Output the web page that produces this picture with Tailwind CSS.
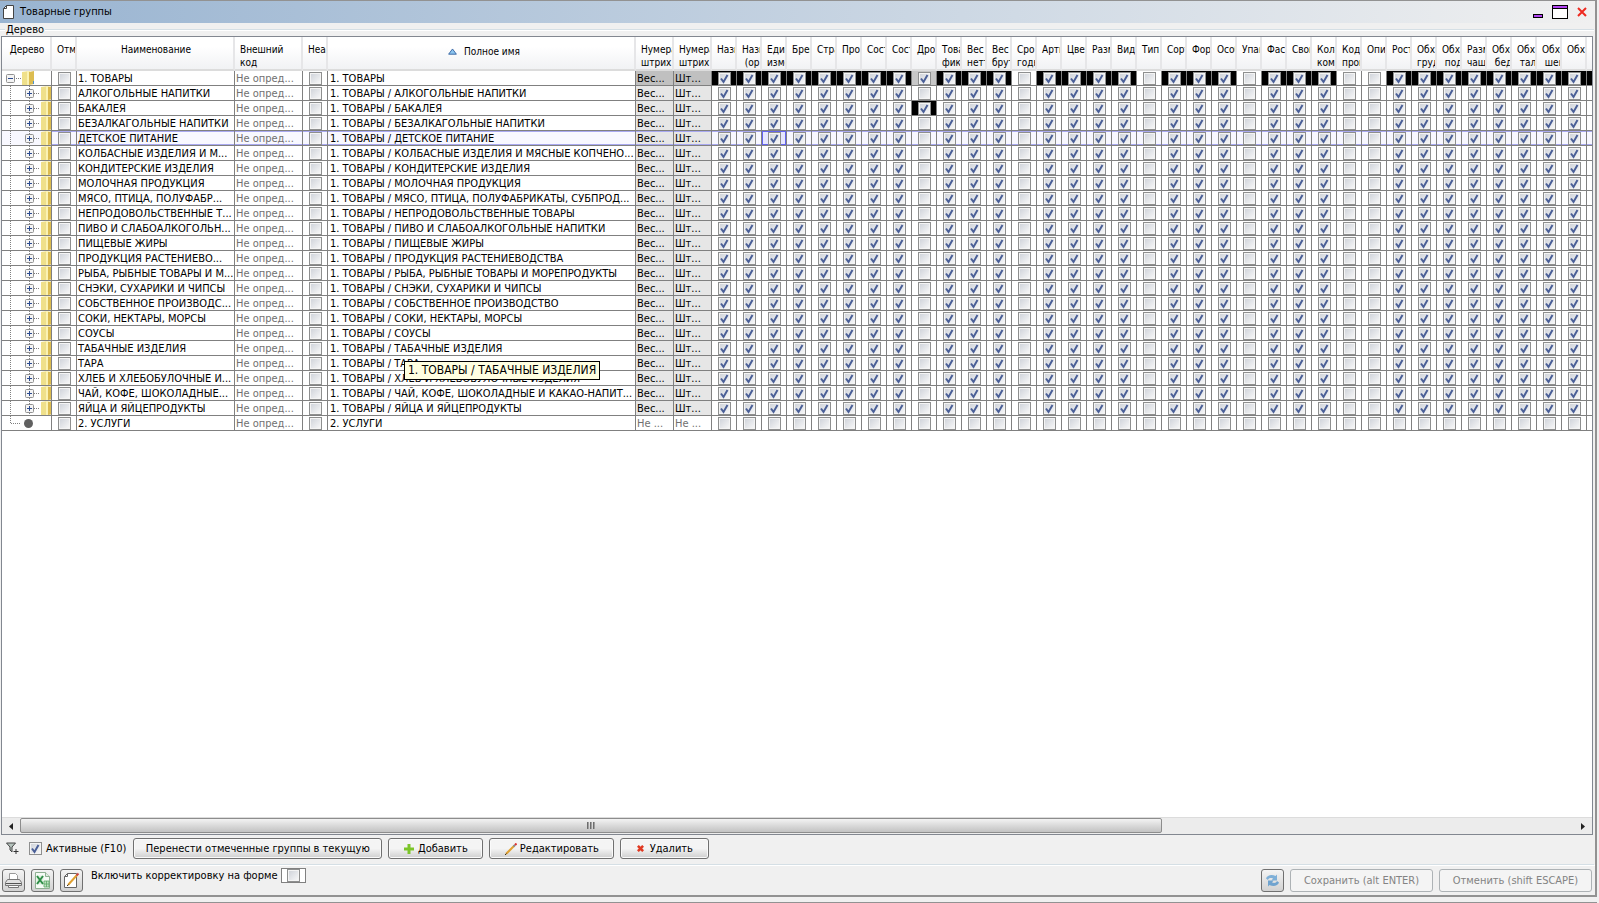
<!DOCTYPE html>
<html lang="ru">

<head>
    <meta charset="UTF-8">
    <meta name="viewport" content="width=device-width, initial-scale=1.0">
    <title>Товарные группы</title>
    <script src="https://cdn.jsdelivr.net/npm/@tailwindcss/browser@4"></script>
</head>

<body class="bg-[#f0f0f0]">
    <div class="flex h-screen flex-col overflow-hidden text-[11px] leading-[14px] text-black font-['DejaVu_Sans_Condensed','DejaVu_Sans',sans-serif]">
        <main class="flex min-h-0 flex-1 flex-col border-t border-r-2 border-b-2 border-[#929292] mr-[2px]">

            <header class="flex h-[22px] shrink-0 items-center bg-linear-to-r from-[#99b4d1] to-[#f0f0f0] pl-[3px] pr-2">
                <svg class="h-[14px] w-[11px]" viewBox="0 0 11 14"><path d="M3.5.5h7v13H.5v-10z" fill="#fff" stroke="#444"/><path d="M.5 3.5h3v-3" fill="none" stroke="#444"/></svg>
                <h1 class="ml-[6px] flex-1">Товарные группы</h1>
                <button type="button" aria-label="Свернуть" class="mt-[8px] h-[4px] w-[10px] border border-black bg-[#b044f0]"></button>
                <button type="button" aria-label="Развернуть" class="ml-[9px] flex h-[14px] w-[16px] items-start border border-black bg-white"><span class="h-[3px] w-full border-b border-black bg-[#b044f0]"></span></button>
                <button type="button" aria-label="Закрыть" class="ml-[9px]">
                    <svg class="h-[10px] w-[10px]" viewBox="0 0 10 10"><path d="M1 1l8 8M9 1L1 9" stroke="#ee2a20" stroke-width="2"/></svg>
                </button>
            </header>

            <!-- group box -->
            <section class="flex min-h-0 flex-1 flex-col pr-[1px]">
                <div class="flex h-[13px] shrink-0 items-center">
                    <span class="h-[2px] w-[5px] border-t border-b border-t-[#d5dfe5] border-b-white"></span>
                    <h2 class="px-[1px]">Дерево</h2>
                    <span class="h-[2px] flex-1 border-t border-b border-t-[#d5dfe5] border-b-white"></span>
                </div>

                <div class="relative mx-[1px] flex min-h-0 flex-1 flex-col border border-[#828790] bg-white">
                    <div class="min-h-0 flex-1 overflow-hidden">
                        <table class="w-[1610px] table-fixed border-separate border-spacing-0">
                            <colgroup id="cols">
                                <col class="w-[50px]"><col class="w-[25px]"><col class="w-[158px]"><col class="w-[68px]"><col class="w-[25px]"><col class="w-[308px]"><col class="w-[38px]"><col class="w-[38px]">
                            </colgroup>
                            <thead><tr id="head"></tr></thead>
                            <tbody id="rows"></tbody>
                        </table>
                    </div>
                    <div class="flex h-[17px] shrink-0 border-t border-[#dcdcdc] bg-[#ececec]">
                        <button type="button" aria-label="Влево" class="flex w-[18px] items-center justify-center">
                            <svg class="h-[7px] w-1" viewBox="0 0 4 7"><path d="M4 0v7L0 3.5z" fill="#222"/></svg>
                        </button>
                        <div class="min-w-0 flex-1">
                            <div class="flex h-[15px] w-[73.5%] items-center justify-center gap-[1px] rounded-[2px] border border-[#8d8d8d] bg-linear-to-b from-[#f3f3f3] via-[#dadada] to-[#c3c3c3]">
                                <span class="h-[7px] w-[2px] bg-linear-to-r from-[#555] to-[#bbb]"></span><span class="h-[7px] w-[2px] bg-linear-to-r from-[#555] to-[#bbb]"></span><span class="h-[7px] w-[2px] bg-linear-to-r from-[#555] to-[#bbb]"></span>
                            </div>
                        </div>
                        <button type="button" aria-label="Вправо" class="flex w-[18px] items-center justify-center">
                            <svg class="h-[7px] w-1" viewBox="0 0 4 7"><path d="M0 0v7l4-3.5z" fill="#222"/></svg>
                        </button>
                    </div>
                    <div role="tooltip" class="absolute top-[324px] left-[402px] h-[19px] border border-black bg-[#ffffe1] px-[3px] text-[12px] leading-[17px] whitespace-nowrap">1. ТОВАРЫ / ТАБАЧНЫЕ ИЗДЕЛИЯ</div>
                </div>

                <div class="flex h-[30px] shrink-0 items-center border-b border-[#d5dfe5] pb-[2px] pl-[6px]">
                    <button type="button" aria-label="Фильтр">
                        <svg class="h-[13px] w-[13px]" viewBox="0 0 13 13"><path d="M.5 1h9L6 5v5L4 8V5z" fill="#b5c3bd" stroke="#444"/><path d="M10 7v5M7.500 9.500h5" stroke="#333"/></svg>
                    </button>
                    <label class="ml-[10px] flex items-center gap-1">
                        <span class="grid">
                            <input type="checkbox" checked class="peer col-start-1 row-start-1 h-[13px] w-[13px] appearance-none border border-[#8e8f8f] bg-linear-to-br from-[#cdd1d8] to-[#fafafa] shadow-[inset_0_0_0_1px_#f4f4f4]">
                            <svg class="pointer-events-none col-start-1 row-start-1 hidden h-[13px] w-[13px] peer-checked:block" viewBox="0 0 13 13"><path d="M3 6.500l2.500 3.500L9.500 3" fill="none" stroke="#4a5f97" stroke-width="2"/></svg>
                        </span>
                        Активные (F10)
                    </label>
                    <div class="ml-[7px] flex gap-[6px]">
                        <button type="button" class="h-[21px] w-[249px] rounded-[3px] border border-[#707070] bg-linear-to-b from-[#f4f4f4] from-50% to-[#cfcfcf] shadow-[inset_0_0_0_1px_#fafafa]">Перенести отмеченные группы в текущую</button>
                        <button type="button" class="flex h-[21px] w-[95px] items-center justify-center gap-1 rounded-[3px] border border-[#707070] bg-linear-to-b from-[#f4f4f4] from-50% to-[#cfcfcf] shadow-[inset_0_0_0_1px_#fafafa]">
                            <svg class="h-[10px] w-[10px]" viewBox="0 0 10 10"><path d="M5 0v10M0 5h10" stroke="#7cc52a" stroke-width="3"/></svg>
                            Добавить
                        </button>
                        <button type="button" class="flex h-[21px] w-[125px] items-center justify-center gap-[3px] rounded-[3px] border border-[#707070] bg-linear-to-b from-[#f4f4f4] from-50% to-[#cfcfcf] shadow-[inset_0_0_0_1px_#fafafa]">
                            <svg class="h-[12px] w-[12px]" viewBox="0 0 12 12"><path d="M1 11L9 3" stroke="#e0a030" stroke-width="2"/><path d="M8.500 3.500L10 2" stroke="#888" stroke-width="2"/><path d="M10 2L11.500.5" stroke="#d33" stroke-width="2"/><path d="M0 12l1.500-1.500" stroke="#333"/></svg>
                            Редактировать
                        </button>
                        <button type="button" class="flex h-[21px] w-[89px] items-center justify-center gap-[6px] rounded-[3px] border border-[#707070] bg-linear-to-b from-[#f4f4f4] from-50% to-[#cfcfcf] shadow-[inset_0_0_0_1px_#fafafa]">
                            <svg class="h-[7px] w-[7px]" viewBox="0 0 8 8"><path d="M1 1l6 6M7 1L1 7" stroke="#e03a22" stroke-width="3"/></svg>
                            Удалить
                        </button>
                    </div>
                </div>
            </section>

            <footer class="flex h-[30px] shrink-0 items-start border-t border-white pt-[2px] pl-[2px] pr-[3px]">
                <div class="mt-[1px] flex gap-[6px]">
                    <button type="button" aria-label="Печать" class="flex h-[23px] w-[23px] items-center justify-center rounded-[3px] border border-[#707070] bg-linear-to-b from-[#f4f4f4] to-[#d2d2d2]">
                        <svg class="h-[17px] w-[17px]" viewBox="0 0 17 17"><path d="M4.500 8V1.500h6l2 2V8" fill="#fff" stroke="#999"/><path d="M2.500 7.500h12l2 3v3H.5v-3z" fill="#e2e2e2" stroke="#777"/><path d="M1 11.500h15" stroke="#555"/><path d="M3.500 13.500h10v2h-10z" fill="#fff" stroke="#777"/></svg>
                    </button>
                    <button type="button" aria-label="Excel" class="flex h-[23px] w-[23px] items-center justify-center rounded-[3px] border border-[#707070] bg-linear-to-b from-[#f4f4f4] to-[#d2d2d2]">
                        <svg class="h-[17px] w-[17px]" viewBox="0 0 17 17"><path d="M1.500.5h10l4 4v12h-14z" fill="#f6fbf6" stroke="#8fb093"/><path d="M11.500.5v4h4" fill="#dfeee0" stroke="#8fb093"/><path d="M2.500 3.500h7v9h-7z" fill="#dff0e0"/><path d="M3 4l6 8M9 4l-6 8" stroke="#2f8f48" stroke-width="2"/><path d="M10 9h5v6h-5zM10 12h5M12.500 9v6" fill="#bfe0c2" stroke="#5aa866" stroke-width=".8"/></svg>
                    </button>
                    <button type="button" aria-label="Правка" class="flex h-[23px] w-[23px] items-center justify-center rounded-[3px] border border-[#707070] bg-linear-to-b from-[#f4f4f4] to-[#d2d2d2]">
                        <svg class="h-[17px] w-[17px]" viewBox="0 0 17 17"><path d="M4.500 1.500h9v14h-12v-11z" fill="#fff" stroke="#666"/><path d="M1.500 4.500h3v-3" fill="none" stroke="#666"/><path d="M5 13L14 3" stroke="#e0a030" stroke-width="2"/><path d="M13.500 3.500l2-2" stroke="#c44" stroke-width="2"/><path d="M4 14l1.500-1.500" stroke="#333"/></svg>
                    </button>
                </div>
                <label class="ml-2 flex items-center gap-1">
                    Включить корректировку на форме
                    <span class="flex h-[15px] w-[25px] justify-center border border-[#808080] bg-white">
                        <input type="checkbox" class="h-[13px] w-[13px] appearance-none border border-[#8e8f8f] bg-linear-to-br from-[#cdd1d8] to-[#fafafa] shadow-[inset_0_0_0_1px_#f4f4f4]">
                    </span>
                </label>
                <div class="mt-[1px] ml-auto flex gap-[6px]">
                    <button type="button" aria-label="Обновить" class="flex h-[23px] w-[23px] items-center justify-center rounded-[3px] border border-[#707070] bg-linear-to-b from-[#f4f4f4] to-[#d2d2d2]">
                        <svg class="h-[15px] w-[15px]" viewBox="0 0 15 15"><path d="M1 5.500C2 2 7 1 10.500 3L12 1.500V7.500H6.500L8 5.500C6 4.500 3.500 5 3 7z" fill="#7fb0d8"/><path d="M14 9.500C13 13 8 14 4.500 12L3 13.500V7.500H8.500L7 9.500C9 10.500 11.500 10 12 8z" fill="#6fa3cf"/></svg>
                    </button>
                    <button type="button" disabled class="h-[23px] w-[143px] rounded-[3px] border border-[#adb2b5] bg-[#f4f4f4] text-[#838383]">Сохранить (alt ENTER)</button>
                    <button type="button" disabled class="h-[23px] w-[153px] rounded-[3px] border border-[#adb2b5] bg-[#f4f4f4] text-[#838383]">Отменить (shift ESCAPE)</button>
                </div>
            </footer>
        </main>
        <div class="mr-[2px] h-[6px] shrink-0 border-b border-[#929292]"></div>
    </div>

    <script>
        // header captions, "\n" starts the second line
        const flags = ["Назв", "Назв\n (ор", "Един\nизме", "Брен", "Стра", "Про", "Сост", "Сост", "Дроб", "Това\nфик", "Вес\nнетт", "Вес\nбрут", "Сро\nгодн", "Арти", "Цвет", "Разм", "Вид", "Тип", "Сорт", "Фор", "Особ", "Упак", "Фасо", "Свой", "Кол-\nкомп", "Код\nпрои", "Опи", "Рост", "Обхв\nгруд", "Обхв\n под", "Разм\nчаше", "Обхв\n бед", "Обхв\n тал", "Обхв\n шеи", "Обхв", ""];
        const emptyFlags = [8, 12, 17, 21, 25, 26];

        // [name, full name]; the full name is built from the name when omitted
        const groups = [
            ["АЛКОГОЛЬНЫЕ НАПИТКИ"],
            ["БАКАЛЕЯ"],
            ["БЕЗАЛКАГОЛЬНЫЕ НАПИТКИ"],
            ["ДЕТСКОЕ ПИТАНИЕ"],
            ["КОЛБАСНЫЕ ИЗДЕЛИЯ И М...", "КОЛБАСНЫЕ ИЗДЕЛИЯ И МЯСНЫЕ КОПЧЕНО..."],
            ["КОНДИТЕРСКИЕ ИЗДЕЛИЯ"],
            ["МОЛОЧНАЯ ПРОДУКЦИЯ"],
            ["МЯСО, ПТИЦА, ПОЛУФАБР...", "МЯСО, ПТИЦА, ПОЛУФАБРИКАТЫ, СУБПРОД..."],
            ["НЕПРОДОВОЛЬСТВЕННЫЕ Т...", "НЕПРОДОВОЛЬСТВЕННЫЕ ТОВАРЫ"],
            ["ПИВО И СЛАБОАЛКОГОЛЬН...", "ПИВО И СЛАБОАЛКОГОЛЬНЫЕ НАПИТКИ"],
            ["ПИЩЕВЫЕ ЖИРЫ"],
            ["ПРОДУКЦИЯ РАСТЕНИЕВО...", "ПРОДУКЦИЯ РАСТЕНИЕВОДСТВА"],
            ["РЫБА, РЫБНЫЕ ТОВАРЫ И М...", "РЫБА, РЫБНЫЕ ТОВАРЫ И МОРЕПРОДУКТЫ"],
            ["СНЭКИ, СУХАРИКИ И ЧИПСЫ"],
            ["СОБСТВЕННОЕ ПРОИЗВОДС...", "СОБСТВЕННОЕ ПРОИЗВОДСТВО"],
            ["СОКИ, НЕКТАРЫ, МОРСЫ"],
            ["СОУСЫ"],
            ["ТАБАЧНЫЕ ИЗДЕЛИЯ"],
            ["ТАРА"],
            ["ХЛЕБ И ХЛЕБОБУЛОЧНЫЕ И...", "ХЛЕБ И ХЛЕБОБУЛОЧНЫЕ ИЗДЕЛИЯ"],
            ["ЧАЙ, КОФЕ, ШОКОЛАДНЫЕ...", "ЧАЙ, КОФЕ, ШОКОЛАДНЫЕ И КАКАО-НАПИТ..."],
            ["ЯЙЦА И ЯЙЦЕПРОДУКТЫ"],
        ];

        const folder = (x) => `<path d="M${x} 1l7-1v14h-7z" fill="#efe08a"/><path d="M${x + 5} 0h3v14h-3z" fill="#faf2b4"/><path d="M${x + 7} 1l5-1v13l-5 1z" fill="#dcbc50"/>`;
        const toggle = (x, open) => `<rect x="${x + .5}" y="3.5" width="8" height="8" rx="1" fill="#f4f4f4" stroke="#919191"/><path d="M${x + 2} 7.5h5${open ? "" : `M${x + 4.5} 5v5`}" stroke="#2b4a8f"/>`;
        const dots = (d) => `<path d="${d}" fill="none" stroke="#808080" stroke-dasharray="1 1"/>`;

        function treeIcon(kind) {
            let inner;
            if (kind === "root") {
                inner = dots("M14 7.5h6") + toggle(4, true) + folder(20) + `<path d="M31 10h1v3h-1z" fill="#4a90d0"/>`;
            } else if (kind === "leaf") {
                inner = dots("M8.5 0v8M9 7.5h10") + `<circle cx="26.5" cy="7.5" r="4.500" fill="#606060"/>`;
            } else {
                inner = dots("M8.5 0v14M27.5 0v14M32 7.5h6") + toggle(23, false) + folder(39);
            }
            return `<svg class="block h-[14px] w-[49px]" viewBox="0 0 49 14">${inner}</svg>`;
        }

        function checkbox(checked, label) {
            return `<span class="grid w-[19px] pt-[1px] pl-[6px]">
                <input type="checkbox" aria-label="${label}" ${checked ? "checked" : ""} class="peer col-start-1 row-start-1 h-[13px] w-[13px] appearance-none border border-[#8e8f8f] bg-linear-to-br from-[#cdd1d8] to-[#fafafa] shadow-[inset_0_0_0_1px_#f4f4f4]">
                <svg class="pointer-events-none col-start-1 row-start-1 hidden h-[13px] w-[13px] peer-checked:block" viewBox="0 0 13 13"><path d="M3 6.5l2.5 3.5L9.5 3" fill="none" stroke="#4a5f97" stroke-width="2"/></svg>
            </span>`;
        }

        const cell = "h-[15px] overflow-hidden border-r border-b border-[#808080] p-0 whitespace-nowrap";
        const text = cell + " pt-[1px] pl-[1px] leading-[13px]";
        const selected = "shadow-[inset_0_1px_#a9a9f0,inset_0_-1px_#a9a9f0]";

        function row(name, full, kind) {
            const isRoot = kind === "root", isLeaf = kind === "leaf";
            const isSel = name === "ДЕТСКОЕ ПИТАНИЕ";
            const sel = isSel ? selected : "";
            const grey = isRoot ? "bg-[#c0c0c0]" : isLeaf ? "text-[#707070]" : "bg-[#e6e6e6]";
            let html = `<tr class="${isSel ? "bg-[#f8f8ff]" : "bg-white"}">
                <td class="${cell}">${treeIcon(kind)}</td>
                <td class="${cell} ${sel}">${checkbox(false, "Отметить " + name)}</td>
                <td class="${text} ${sel}">${name}</td>
                <td class="${text} ${sel} text-[#707070]">Не опред...</td>
                <td class="${cell} ${sel}">${checkbox(false, "Неактивный " + name)}</td>
                <td class="${text} ${sel}"><span class="pl-[1px]">${full}</span></td>
                <td class="${text} ${sel} ${grey}">${isLeaf ? "Не ..." : "Вес..."}</td>
                <td class="${text} ${sel} ${grey}">${isLeaf ? "Не ..." : "Шт..."}</td>`;
            flags.forEach((title, i) => {
                let checked = !isLeaf && !emptyFlags.includes(i);
                let extra = isRoot && checked ? "bg-black" : sel;
                if (i === 8 && isRoot) { checked = true; extra = "bg-[#c8c8c8]"; }
                if (i === 8 && name === "БАКАЛЕЯ") { checked = true; extra = "bg-black"; }
                if (i === 2 && isSel) extra = "bg-[#e6e6ff] shadow-[inset_0_0_0_1px_#6464f0]";
                html += `<td class="${cell} ${extra}">${checkbox(checked, title.replace("\n", " "))}</td>`;
            });
            return html + "</tr>";
        }

        const th = "h-[34px] overflow-hidden border-r-2 border-b-2 border-r-[#e6e6e8] border-b-[#dcdcdc] bg-linear-to-b from-white from-30% to-[#f1f2f4] pt-[6px] align-top text-[10px] leading-[13px] font-normal whitespace-pre";
        const thCenter = th + " pl-[2px] text-center";
        const thLeft = th + " pl-[5px] text-left";
        const numerators = ["Нумера\nштрих", "Нумера\nштрих"];
        document.getElementById("head").innerHTML =
            `<th class="${thCenter}">Дерево</th>
             <th class="${thLeft}">Отм</th>
             <th class="${thCenter}">Наименование</th>
             <th class="${thLeft}">Внешний\nкод</th>
             <th class="${thLeft}">Неак</th>
             <th class="${thCenter}"><span class="flex items-center justify-center gap-[7px] pt-[2px] pl-1"><svg class="h-[7px] w-[9px]" viewBox="0 0 10 7"><path d="M5 .7L9.300 6.500H.7z" fill="#8cc6f0" stroke="#2f5f9f"/></svg>Полное имя</span></th>`
            + numerators.concat(flags).map(t => `<th class="${thLeft}">${t}</th>`).join("");
        document.getElementById("cols").insertAdjacentHTML("beforeend", `<col class="w-[25px]">`.repeat(flags.length));

        document.getElementById("rows").innerHTML =
            row("1. ТОВАРЫ", "1. ТОВАРЫ", "root")
            + groups.map(([name, full]) => row(name, "1. ТОВАРЫ / " + (full || name), "child")).join("")
            + row("2. УСЛУГИ", "2. УСЛУГИ", "leaf");
    </script>
</body>

</html>
